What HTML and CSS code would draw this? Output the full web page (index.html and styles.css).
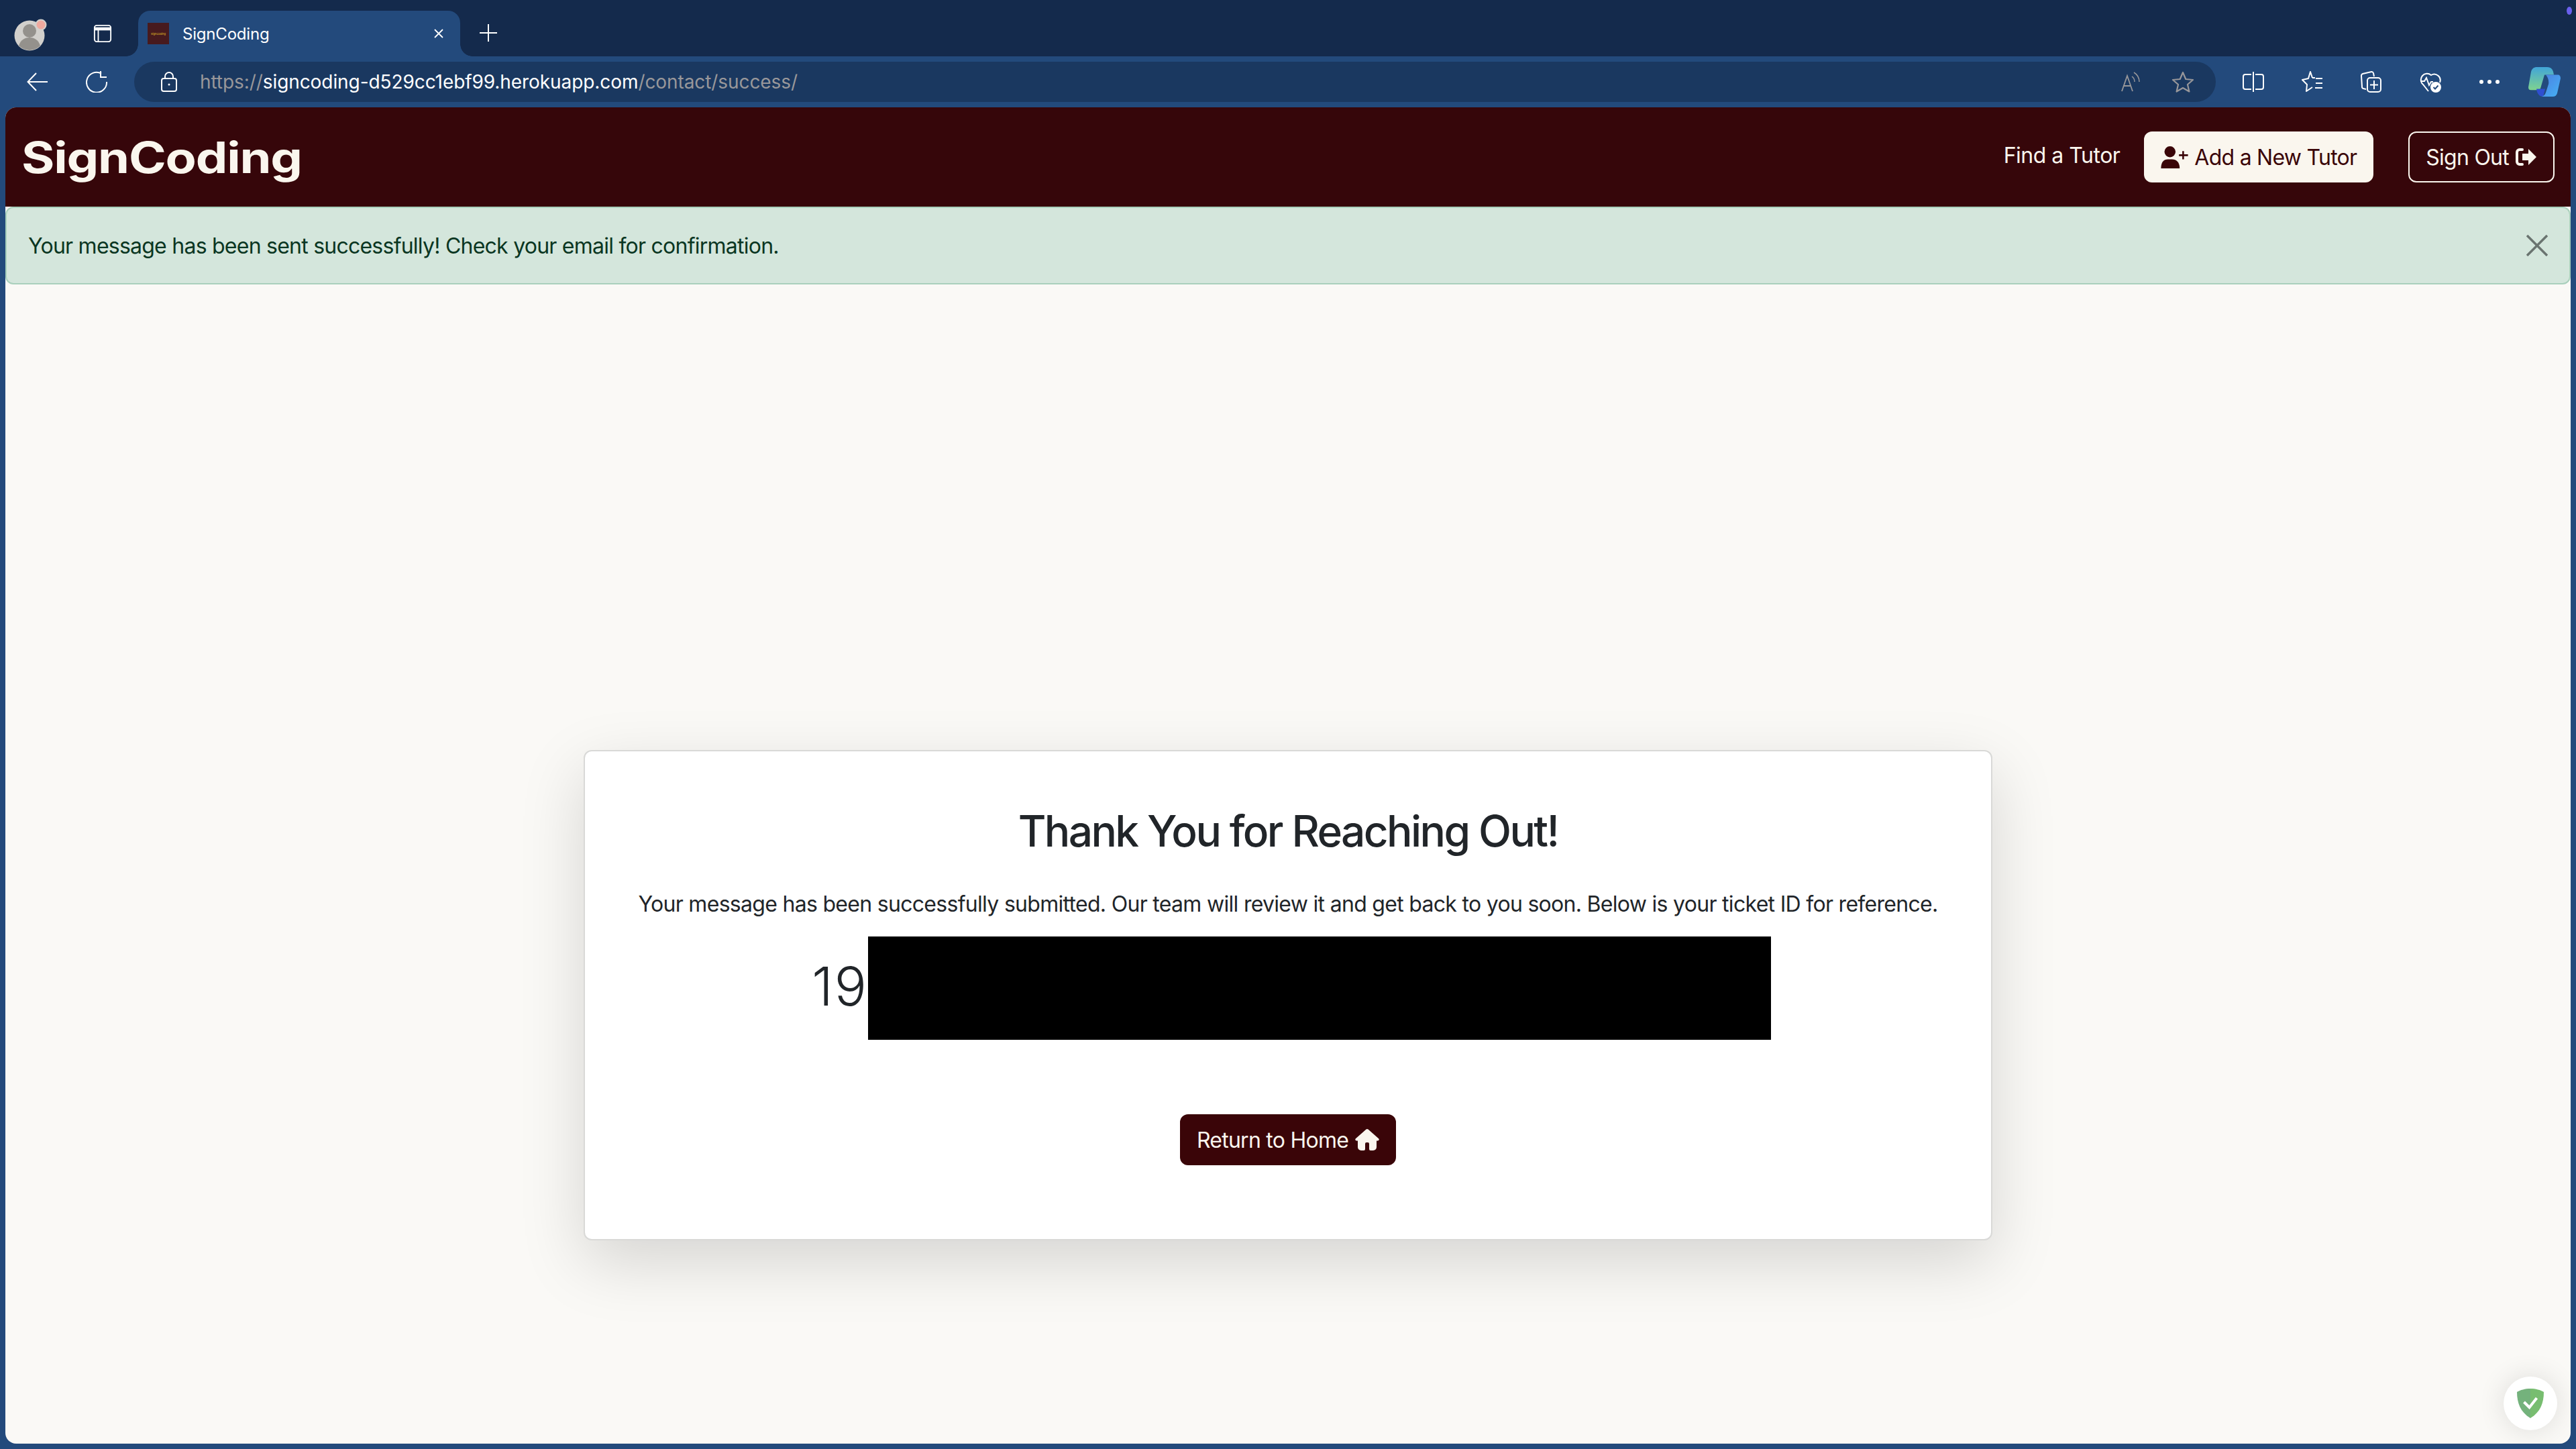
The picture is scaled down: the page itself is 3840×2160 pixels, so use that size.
FILE: index.html
```html
<!DOCTYPE html>
<html lang="en">
<head>
<meta charset="utf-8">
<title>SignCoding</title>
<link rel="stylesheet" href="styles.css">
</head>
<body>
<header class="tabstrip">
  <div class="avatar-wrap">
    <svg class="avatar" viewBox="0 0 50 50"><circle cx="23" cy="27" r="22.5" fill="#d2d0cc"/><circle cx="23" cy="20" r="10" fill="#94918c"/><path d="M7 42c3-9 9-12 16-12s13 3 16 12a22 22 0 0 1-32 0z" fill="#94918c"/><circle cx="40" cy="11" r="7.5" fill="#efa99e" stroke="#d2d0cc" stroke-width="2"/></svg>
  </div>
  <svg class="tabs-icon" viewBox="0 0 30 30" fill="none" stroke="#fff" stroke-width="2"><rect x="2" y="2" width="26" height="26" rx="3.5"/><path d="M2 7.5h26" stroke-width="5"/><path d="M8 8v20"/></svg>
  <div class="tab">
    <span class="favicon"><span class="favicon-text">SignCoding</span></span>
    <span class="tab-title">SignCoding</span>
    <svg class="tab-close" viewBox="0 0 16 16" stroke="#fff" stroke-width="1.8"><path d="M2 2l12 12M14 2L2 14"/></svg>
  </div>
  <svg class="new-tab" viewBox="0 0 28 28" stroke="#fff" stroke-width="2"><path d="M14 1v26M1 14h26"/></svg>
  <span class="notice-dot"></span>
</header>

<div class="toolbar">
  <svg class="tool-icon back" viewBox="0 0 32 28" fill="none" stroke="#fff" stroke-width="2"><path d="M31 14H2M14 1L1.500 14 14 27"/></svg>
  <svg class="tool-icon reload" viewBox="0 0 32 32" fill="none" stroke="#fff" stroke-width="2"><path d="M23 3.500A15 15 0 1 0 31 16"/><path d="M22 0v10h9" transform="translate(0 -1)"/></svg>
  <div class="omnibox">
    <svg class="lock" viewBox="0 0 24 30" fill="none" stroke="#fff" stroke-width="2"><rect x="1" y="10" width="22" height="19" rx="3"/><path d="M6 10V7a6 6 0 0 1 12 0v3"/><circle cx="12" cy="19" r="1.500" fill="#fff" stroke="none"/></svg>
    <span class="url"><span class="dim">https://</span>signcoding-d529cc1ebf99.herokuapp.com<span class="dim">/contact/success/</span></span>
    <span class="omni-spacer"></span>
    <svg class="read-aloud" viewBox="0 0 30 30" fill="none" stroke="#98979a" stroke-width="1.800"><path d="M2 29L10 6l8 23M5 21h10"/><path d="M17 7c3 2 4 5 4 8M20 1c5 3 8 8 8 14" stroke-width="1.500"/></svg>
    <svg class="fav-star" viewBox="0 0 34 32" fill="none" stroke="#98979a" stroke-width="2.200" stroke-linejoin="round"><path d="M17 2l4.300 10 10.700 1-8 7 2.400 10.500L17 25l-9.400 5.500L10 20l-8-7 10.700-1z"/></svg>
  </div>
  <div class="tool-group">
    <svg class="tool-svg" viewBox="0 0 32 32" fill="none" stroke="#fff" stroke-width="2"><path d="M13 5H4a3 3 0 0 0-3 3v16a3 3 0 0 0 3 3h9M19 5h9a3 3 0 0 1 3 3v16a3 3 0 0 1-3 3h-9M16 1v30"/></svg>
    <svg class="tool-svg" viewBox="0 0 32 32" fill="none" stroke="#fff" stroke-width="2" stroke-linejoin="round"><path d="M16 10L13 1l-3 10-9 2 7 7-1 10 9-6"/><path d="M16 10h4M21 11h10M21 18h10M20 25h11"/></svg>
    <svg class="tool-svg" viewBox="0 0 32 32" fill="none" stroke="#fff" stroke-width="2"><path d="M8 27L4 26a2.500 2.500 0 0 1-2-3L1 7a3 3 0 0 1 2-3l13-3a3 3 0 0 1 3 2l1 5"/><rect x="10" y="10" width="20" height="21" rx="4"/><path d="M20 14v13M14 20.500h12"/></svg>
    <svg class="tool-svg" viewBox="0 0 32 32" fill="none" stroke="#fff" stroke-width="2"><path d="M13 30L5 20a9 9 0 0 1 12-14 9 9 0 0 1 13 11"/><path d="M1 15h6l3-5 4 11 3-5h3"/><circle cx="24" cy="24" r="8" fill="#fff" stroke="none"/><path d="M20.500 24l2.500 2.500 4.500-5" stroke="#234a7c"/></svg>
    <svg class="tool-svg dots" viewBox="0 0 32 8" fill="#fff"><circle cx="4" cy="4" r="3"/><circle cx="16" cy="4" r="3"/><circle cx="28" cy="4" r="3"/></svg>
    <svg class="copilot" viewBox="0 0 48 50" preserveAspectRatio="none">
      <defs>
        <linearGradient id="cpa" x1="0" y1="0" x2="0" y2="1"><stop offset="0" stop-color="#42a5d8"/><stop offset="1" stop-color="#7fd38f"/></linearGradient>
        <linearGradient id="cpb" x1="0" y1="0" x2="1" y2="1"><stop offset="0" stop-color="#4c7fe0"/><stop offset="1" stop-color="#45b2f5"/></linearGradient>
      </defs>
      <path d="M28 0c6 0 9 4 10 13H24l-6 23c-1 2-2 3-4 3H4c-3 0-4-2-4-5L4 8c1-5 4-8 9-8z" fill="url(#cpa)"/>
      <path d="M12 37h13l-3 13c-6 0-9-5-10-13z" fill="#2f4fd0"/>
      <path d="M26 13h18c3 0 4 3 4 6l-5 25c-1 4-3 6-7 6H20c3-1 5-3 6-7l4-14c1-6-1-12-4-16z" fill="url(#cpb)"/>
    </svg>
  </div>
</div>

<div class="frame">
  <nav class="navbar">
    <a class="brand">SignCoding</a>
    <div class="nav-actions">
      <a class="nav-link">Find a Tutor</a>
      <a class="btn btn-light">
        <svg class="icon-user" viewBox="0 0 40 32" fill="#3a0508"><circle cx="13" cy="8" r="8"/><path d="M0 32c0-9 4-13 10-13h6c6 0 11 4 11 13z"/><path d="M32 7v12M26 13h13" fill="none" stroke="#3a0508" stroke-width="2.500"/></svg>
        Add a New Tutor
      </a>
      <a class="btn btn-outline">Sign Out
        <svg class="icon-out" viewBox="0 0 32 28" fill="#faf6ee"><path d="M10 3H6a4 4 0 0 0-4 4v14a4 4 0 0 0 4 4h4" fill="none" stroke="#faf6ee" stroke-width="4" stroke-linecap="round"/><path d="M19 2l12 12-12 12v-7h-9V9h9z"/></svg>
      </a>
    </div>
  </nav>
  <div class="alert">
    <span>Your message has been sent successfully! Check your email for confirmation.</span>
    <svg class="alert-close" viewBox="0 0 32 32" stroke="#6a7470" stroke-width="3.500"><path d="M1 1l30 30M31 1L1 31"/></svg>
  </div>
  <main class="content">
    <section class="card">
      <h1 class="title">Thank You for Reaching Out!</h1>
      <p class="lead-text">Your message has been successfully submitted. Our team will review it and get back to you soon. Below is your ticket ID for reference.</p>
      <div class="ticket"><span class="ticket-id">19</span><span class="redacted"></span></div>
      <a class="btn btn-primary">Return to Home
        <svg class="icon-home" viewBox="0 0 36 32" fill="#faf6ee"><path d="M18 0c.7 0 1.300.2 1.800.7l15.300 13.500c1.300 1.200.5 3.300-1.300 3.300H32V27a5 5 0 0 1-5 5h-4a2 2 0 0 1-2-2v-8a2 2 0 0 0-2-2h-2a2 2 0 0 0-2 2v8a2 2 0 0 1-2 2H9a5 5 0 0 1-5-5v-9.500H2.200c-1.800 0-2.600-2.100-1.300-3.300L16.200.7C16.700.2 17.300 0 18 0z"/></svg>
      </a>
    </section>
    <div class="guard">
      <svg class="shield" viewBox="0 0 42 44"><path d="M21 0C13 0 6 2 1 5c0 16 5 30 20 39z" fill="#74b27c"/><path d="M21 0c8 0 15 2 20 5 0 16-5 30-20 39z" fill="#78bd70"/><path d="M11.500 20l8 8 11-14" fill="none" stroke="#fff" stroke-width="4"/></svg>
    </div>
  </main>
</div>
</body>
</html>
```

FILE: styles.css
```css
* { box-sizing: border-box; }
html, body { margin: 0; height: 100%; }
body {
  display: flex;
  flex-direction: column;
  height: 2160px;
  overflow: hidden;
  background: #234a7c;
  font-family: Inter, "Liberation Sans", sans-serif;
  color: #212529;
}

/* Browser chrome */
.tabstrip {
  position: relative;
  display: flex;
  align-items: flex-start;
  height: 84px;
  flex: none;
  background: #142a4c;
}
.avatar-wrap { width: 139px; height: 84px; padding: 26px 0 0 21px; flex: none; }
.avatar { display: block; width: 50px; height: 50px; }
.tabs-icon { width: 28px; height: 28px; margin: 36px 39px 0 0; flex: none; }
.tab {
  position: relative;
  display: flex;
  align-items: center;
  width: 480px;
  height: 68px;
  margin: 16px 0 0 0;
  padding: 0 24px 0 14px;
  background: #234a7c;
  border-radius: 18px 18px 0 0;
  flex: none;
  color: #fff;
}
.tab::before,
.tab::after {
  content: "";
  position: absolute;
  bottom: 0;
  width: 18px;
  height: 18px;
}
.tab::before {
  left: -18px;
  background: radial-gradient(circle at 0 0, transparent 17.500px, #234a7c 18px);
}
.tab::after {
  right: -18px;
  background: radial-gradient(circle at 100% 0, transparent 17.500px, #234a7c 18px);
}
.favicon {
  display: flex;
  align-items: center;
  justify-content: center;
  width: 32px;
  height: 32px;
  background: #471a1e;
  flex: none;
}
.favicon-text { font-size: 4px; color: #e8c52a; white-space: nowrap; }
.tab-title { margin-left: 20px; font-size: 24px; flex: 1; letter-spacing: -0.2px; }
.tab-close { width: 16px; height: 16px; flex: none; }
.new-tab { width: 28px; height: 28px; margin: 35px 0 0 28px; flex: none; }
.notice-dot {
  position: absolute;
  top: 10px;
  right: 6px;
  width: 8px;
  height: 12px;
  border-radius: 50%;
  background: #6a60ee;
}

.toolbar {
  display: flex;
  align-items: center;
  height: 76px;
  flex: none;
  padding: 0 0 0 40px;
  background: #234a7c;
}
.tool-icon { flex: none; }
.back { width: 32px; height: 28px; }
.reload { width: 32px; height: 32px; margin-left: 56px; }
.omnibox {
  display: flex;
  align-items: center;
  width: 3103px;
  height: 60px;
  margin-left: 40px;
  padding: 0 32px 0 40px;
  border-radius: 30px;
  background: #1a3860;
  flex: none;
}
.lock { width: 24px; height: 30px; flex: none; }
.url { margin-left: 34px; font-size: 28px; letter-spacing: -0.08px; color: #fff; white-space: nowrap; }
.dim { color: #98979a; }
.omni-spacer { flex: 1; }
.read-aloud { width: 30px; height: 30px; flex: none; }
.fav-star { width: 34px; height: 32px; margin-left: 46px; flex: none; }
.tool-group { display: flex; align-items: center; gap: 56px; margin-left: 40px; flex: none; }
.tool-svg { width: 32px; height: 32px; flex: none; }
.dots { height: 8px; width: 32px; }
.copilot { width: 48px; height: 44px; margin-left: -14px; flex: none; }

/* Page */
.frame {
  display: flex;
  flex-direction: column;
  flex: none;
  width: 3824px;
  height: 1992px;
  margin: 0 8px;
  overflow: hidden;
  border-radius: 16px;
  background: #faf9f6;
}
.navbar {
  display: flex;
  align-items: center;
  justify-content: space-between;
  height: 148px;
  flex: none;
  padding: 0 24px;
  background: #36060a;
}
.brand {
  display: inline-block;
  font-family: Inter, "Liberation Sans", sans-serif;
  font-weight: 700;
  font-size: 64px;
  letter-spacing: -1px;
  color: #faf6ee;
  transform: scaleX(1.18);
  transform-origin: left center;
}
.nav-actions { display: flex; align-items: center; }
.nav-link { margin: 0 36px 6px 0; font-size: 32px; letter-spacing: -0.5px; color: #faf6ee; }
.btn {
  display: inline-flex;
  align-items: center;
  height: 76px;
  padding: 0 25px;
  border-radius: 12px;
  font-size: 32px;
  letter-spacing: -0.75px;
  white-space: nowrap;
}
.btn-light { background: #faf6ee; color: #3a0508; margin-right: 52px; }
.btn-outline { padding: 0 24px; border: 2px solid #faf6ee; color: #faf6ee; }
.icon-user { width: 42px; height: 33px; margin-right: 8px; }
.icon-out { width: 32px; height: 28px; margin-left: 10px; }

.alert {
  display: flex;
  align-items: center;
  justify-content: space-between;
  height: 116px;
  flex: none;
  padding: 0 32px 0 32px;
  border: 2px solid #a9d0bc;
  border-radius: 12px;
  background: #d4e6dc;
  font-size: 32px;
  letter-spacing: -0.76px;
  color: #0a3622;
}
.alert-close { width: 32px; height: 32px; flex: none; }

.content {
  position: relative;
  display: flex;
  flex-direction: column;
  align-items: center;
  flex: 1;
  padding-top: 694px;
}
.card {
  display: flex;
  flex-direction: column;
  align-items: center;
  width: 2100px;
  height: 731px;
  padding-top: 80px;
  border: 2px solid #d9d9d7;
  border-radius: 12px;
  background: #fff;
  box-shadow: 0 32px 96px rgba(0, 0, 0, 0.15);
}
.title {
  margin: 0;
  font-size: 64px;
  font-weight: 500;
  letter-spacing: -2.6px;
  line-height: 77px;
  color: #212529;
}
.lead-text { margin: 47px 0 0; font-size: 32px; letter-spacing: -0.7px; line-height: 48px; }
.ticket {
  display: flex;
  align-items: center;
  justify-content: center;
  margin-top: 24px;
  padding-left: 10px;
}
.ticket-id { margin-bottom: 6px; font-size: 80px; font-weight: 300; letter-spacing: 2px; line-height: 96px; }
.redacted { display: block; width: 1346px; height: 154px; background: #000; }
.btn-primary {
  margin-top: 111px;
  background: #3a0508;
  color: #faf6ee;
}
.icon-home { width: 36px; height: 32px; margin-left: 10px; }

.guard {
  position: absolute;
  right: 20px;
  bottom: 20px;
  display: flex;
  align-items: center;
  justify-content: center;
  width: 80px;
  height: 80px;
  border-radius: 50%;
  background: #fff;
  box-shadow: 0 0 40px rgba(0, 0, 0, 0.12);
}
.shield { width: 42px; height: 44px; }
```
